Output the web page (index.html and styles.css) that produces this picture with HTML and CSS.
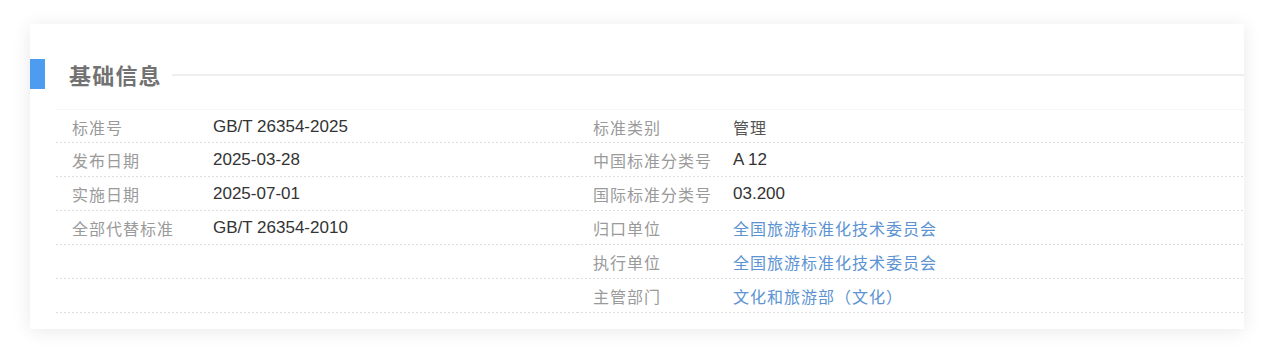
FILE: index.html
```html
<!DOCTYPE html>
<html lang="zh-CN">
<head>
<meta charset="utf-8">
<title>基础信息</title>
<link rel="stylesheet" href="styles.css">
</head>
<body>
<div class="card">
  <div class="heading">
    <span class="bar"></span>
    <h2 class="title">基础信息</h2>
    <span class="rule"></span>
  </div>
  <div class="info">
    <div class="col col-left">
      <div class="row"><span class="label">标准号</span><span class="value">GB/T 26354-2025</span></div>
      <div class="row"><span class="label">发布日期</span><span class="value">2025-03-28</span></div>
      <div class="row"><span class="label">实施日期</span><span class="value">2025-07-01</span></div>
      <div class="row"><span class="label">全部代替标准</span><span class="value">GB/T 26354-2010</span></div>
      <div class="row"><span class="label"></span><span class="value"></span></div>
      <div class="row"><span class="label"></span><span class="value"></span></div>
    </div>
    <div class="col col-right">
      <div class="row"><span class="label">标准类别</span><span class="value cjk">管理</span></div>
      <div class="row"><span class="label">中国标准分类号</span><span class="value">A 12</span></div>
      <div class="row"><span class="label">国际标准分类号</span><span class="value">03.200</span></div>
      <div class="row"><span class="label">归口单位</span><a class="value link" href="#">全国旅游标准化技术委员会</a></div>
      <div class="row"><span class="label">执行单位</span><a class="value link" href="#">全国旅游标准化技术委员会</a></div>
      <div class="row"><span class="label">主管部门</span><a class="value link" href="#">文化和旅游部（文化）</a></div>
    </div>
  </div>
</div>
</body>
</html>
```
FILE: styles.css
```css
* { box-sizing: border-box; }
html, body { margin: 0; padding: 0; background: #fff; }
body {
  font-family: "Liberation Sans", Arial, "Noto Sans CJK SC", sans-serif;
  padding: 24px 24px 24px 30px;
}
.card {
  width: 1214px;
  height: 305px;
  background: #fff;
  box-shadow: 0 2px 18px rgba(0, 0, 0, 0.09);
  padding: 35px 0 0 0;
}
.heading {
  display: flex;
  align-items: center;
  height: 30px;
}
.bar {
  width: 15px;
  height: 30px;
  background: #4d9cf0;
  flex: none;
}
.title {
  margin: 0 10px 0 24px;
  font-family: "Noto Sans CJK SC", sans-serif;
  font-size: 22px;
  font-weight: 700;
  color: #727272;
  line-height: 30px;
  letter-spacing: 1.2px;
}
.rule {
  flex: 1;
  height: 2px;
  background: #eeeeee;
  margin-top: 1px;
}
.info {
  display: flex;
  margin: 20px 0 0 26px;
  border-top: 1px solid #f6f6f6;
}
.col-left { width: 521px; }
.col-right { flex: 1; }
.row {
  display: flex;
  align-items: center;
  height: 34px;
  padding-left: 16px;
  background-image: linear-gradient(to right, #dddddd 60%, transparent 60%);
  background-size: 4px 1px;
  background-repeat: repeat-x;
  background-position: left bottom;
}
.info > .col .row:first-child { height: 33px; }
.label {
  width: 141px;
  flex: none;
  font-family: "Noto Sans CJK SC", sans-serif;
  font-size: 16px;
  letter-spacing: 1px;
  color: #9a9a9a;
}
.col-right .label { width: 140px; }
.value {
  font-size: 17px;
  color: #333333;
}
.cjk {
  font-family: "Noto Sans CJK SC", sans-serif;
  font-size: 16px;
  letter-spacing: 1px;
  color: #555555;
}
.link {
  font-family: "Noto Sans CJK SC", sans-serif;
  font-size: 16px;
  letter-spacing: 1px;
  color: #5b93d3;
  text-decoration: none;
}
```
